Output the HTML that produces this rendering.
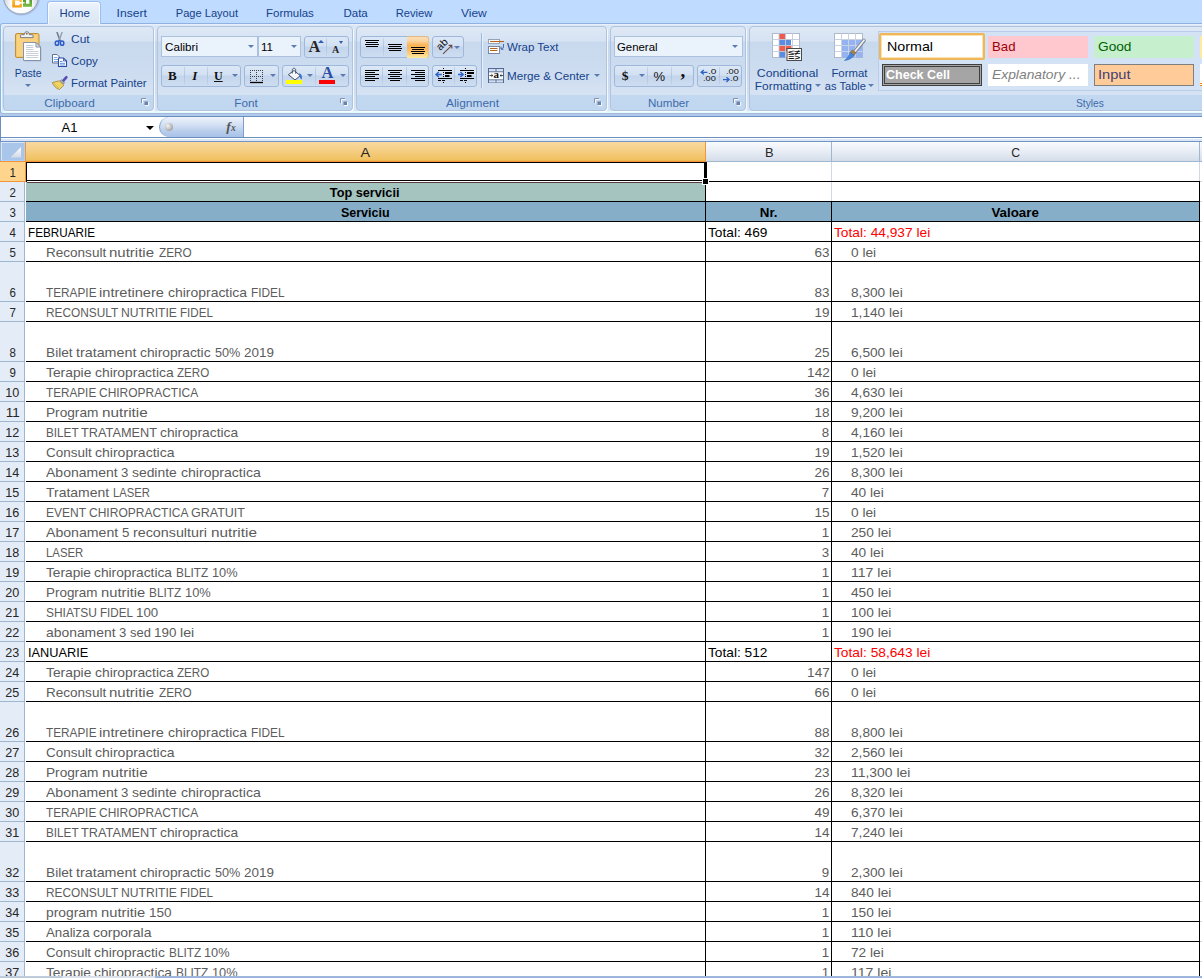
<!DOCTYPE html>
<html lang="ro">
<head>
<meta charset="utf-8">
<title>Top servicii</title>
<style>
html,body{margin:0;padding:0}
html{overflow:hidden;background:#fff}
body{width:1202px;height:978px;overflow:hidden;position:relative;background:#fff;font-family:"Liberation Sans",sans-serif;}
.t{position:absolute;white-space:pre;line-height:1;display:block}
.a{position:absolute}
.tabbar{left:0;top:0;width:1202px;height:116px;background:linear-gradient(#BFDBFF 0,#BFDBFF 100px,#B1C9ED 112px)}
.ribbon{left:0;top:23px;width:1210px;height:91px;box-sizing:border-box;border:1px solid #8DB2E3;border-bottom-color:#A3B9D8;border-radius:3px 0 0 3px;box-shadow:inset 0 -2px 0 #E4FAFF,inset 1px 0 0 #E4FAFF,inset 0 1px 0 #E9F0F9;background:linear-gradient(#DBE7F5 0,#D3E0F1 16px,#C7D8ED 18px,#CDDCEF 60px,#D9E5F4 88px)}
.grp{box-sizing:border-box;top:26px;height:85px;border:1px solid #B0C4E0;border-radius:4px;background:linear-gradient(#DEE8F5 0,#D6E3F3 14px,#C8D9EE 15px,#CEDDF0 50px,#D6E3F3 68px,#C2D8F0 68px,#C1D7EF 84px);box-shadow:1px 1px 0 rgba(255,255,255,.75)}
.combo{box-sizing:border-box;background:#EAF2FB;border:1px solid #ABC1DE;height:21px}
.bgrp{box-sizing:border-box;border:1px solid #9EB8DB;border-radius:3px;height:22px;background:linear-gradient(#DCE8F6 0,#D2E0F2 9px,#C3D5EC 10px,#CFDEF1 21px)}
.bsep{width:1px;background:linear-gradient(#C3D3EA,#AFC4E2,#C3D3EA);top:1px;height:18px}
.dd{width:0;height:0;border-left:3px solid transparent;border-right:3px solid transparent;border-top:3px solid #5B7CB0}
.launch{width:7px;height:7px}
.rowh{left:0;width:25px;background:#E4ECF7;border-right:1px solid #9EB6CE;border-bottom:1px solid #9EB6CE;box-sizing:border-box}
.colh{top:142px;height:20px;box-sizing:border-box;border-right:1px solid #9EB6CE;border-bottom:1px solid #9EB6CE;background:linear-gradient(#F9FCFD,#E8EDF5 50%,#D5DDEA)}
.hl{height:1px;background:#000}
.vl{width:1px;background:#000}
.gl{background:#D0D7E5}

</style>
</head>
<body>
<div class="a tabbar"></div>
<div class="a ribbon"></div>
<div class="a" style="left:47px;top:1px;width:54px;height:23px;box-sizing:border-box;border:1px solid #9BBDE9;border-bottom:none;border-radius:4px 4px 0 0;background:linear-gradient(#EDF3FC,#E2ECF8 10px,#DCE7F5)"></div>
<div class="a" style="left:48px;top:2px;width:52px;height:22px;box-sizing:border-box;border:1px solid rgba(255,255,255,.75);border-bottom:none;border-radius:3px 3px 0 0"></div>
<span class="t" style="left:59.53px;top:7.59px;font-size:11px;color:#15428B;transform:scaleX(1.0360);transform-origin:center center;">Home</span>
<span class="t" style="left:118.04px;top:7.59px;font-size:11px;color:#15428B;transform:scaleX(1.1012);transform-origin:center center;">Insert</span>
<span class="t" style="left:176.41px;top:7.59px;font-size:11px;color:#15428B;transform:scaleX(1.0084);transform-origin:center center;">Page Layout</span>
<span class="t" style="left:267.08px;top:7.59px;font-size:11px;color:#15428B;transform:scaleX(1.0427);transform-origin:center center;">Formulas</span>
<span class="t" style="left:343.98px;top:7.59px;font-size:11px;color:#15428B;transform:scaleX(1.0452);transform-origin:center center;">Data</span>
<span class="t" style="left:396.46px;top:7.59px;font-size:11px;color:#15428B;transform:scaleX(1.0200);transform-origin:center center;">Review</span>
<span class="t" style="left:461.67px;top:7.59px;font-size:11px;color:#15428B;transform:scaleX(1.0906);transform-origin:center center;">View</span>
<div class="a grp" style="left:3px;width:151px"></div>
<span class="t" style="left:46.25px;top:97.89px;font-size:11px;color:#3E6AAA;transform:scaleX(1.0723);transform-origin:center center;">Clipboard</span>
<span class="t" style="left:13.53px;top:68.19px;font-size:11px;color:#15428B;transform:scaleX(0.9524);transform-origin:center center;">Paste</span>
<div class="a dd" style="left:24.5px;top:84.2px;border-top-color:#5B7CB0"></div>
<span class="t" style="left:71.00px;top:33.89px;font-size:11px;color:#15428B;transform:scaleX(1.0861);transform-origin:left center;">Cut</span>
<span class="t" style="left:71.00px;top:55.89px;font-size:11px;color:#15428B;transform:scaleX(1.0433);transform-origin:left center;">Copy</span>
<span class="t" style="left:71.00px;top:77.89px;font-size:11px;color:#15428B;transform:scaleX(1.0392);transform-origin:left center;">Format Painter</span>
<div class="a grp" style="left:157px;width:196px"></div>
<span class="t" style="left:235.19px;top:97.89px;font-size:11px;color:#3E6AAA;transform:scaleX(1.0674);transform-origin:center center;">Font</span>
<div class="a combo" style="left:161px;top:36px;width:97px"></div>
<span class="t" style="left:164.60px;top:41.99px;font-size:11px;color:#000;transform:scaleX(1.0581);transform-origin:left center;">Calibri</span>
<div class="a dd" style="left:247.5px;top:45.2px;border-top-color:#5B7CB0"></div>
<div class="a combo" style="left:258px;top:36px;width:43px"></div>
<span class="t" style="left:261.30px;top:41.99px;font-size:11px;color:#000;transform:scaleX(1.0506);transform-origin:left center;">11</span>
<div class="a dd" style="left:290.5px;top:45.2px;border-top-color:#5B7CB0"></div>
<div class="a bgrp" style="left:304px;top:36px;width:45px"></div>
<div class="a bsep" style="left:326px;top:38px"></div>
<span class="t" style="left:308.60px;top:39.47px;font-size:16.4px;color:#262626;font-weight:bold;font-family:'Liberation Serif', serif;">A</span>
<div class="a" style="left:317.600px;top:39.800px;width:0;height:0;border-left:3px solid transparent;border-right:3px solid transparent;border-bottom:3px solid #2F5DAE"></div>
<span class="t" style="left:332.00px;top:44.83px;font-size:10px;color:#262626;font-weight:bold;font-family:'Liberation Serif', serif;">A</span>
<div class="a" style="left:339px;top:41px;width:0;height:0;border-left:2.500px solid transparent;border-right:2.500px solid transparent;border-top:3px solid #2F5DAE"></div>
<div class="a bgrp" style="left:161px;top:65px;width:80px"></div>
<div class="a bsep" style="left:184px;top:67px"></div>
<div class="a bsep" style="left:207px;top:67px"></div>
<span class="t" style="left:168.00px;top:69.31px;font-size:13px;color:#111;font-weight:bold;font-family:'Liberation Serif', serif;">B</span>
<span class="t" style="left:192.30px;top:69.31px;font-size:13px;color:#111;font-weight:bold;font-style:italic;font-family:'Liberation Serif', serif;">I</span>
<span class="t" style="left:214.00px;top:69.75px;font-size:12px;color:#111;font-weight:bold;font-family:'Liberation Serif', serif;text-decoration:underline;">U</span>
<div class="a dd" style="left:231.5px;top:74.2px;border-top-color:#5B7CB0"></div>
<div class="a bgrp" style="left:244px;top:65px;width:35px"></div>
<div class="a dd" style="left:269.5px;top:74.2px;border-top-color:#5B7CB0"></div>
<div class="a bgrp" style="left:282px;top:65px;width:67px"></div>
<div class="a bsep" style="left:315px;top:67px"></div>
<div class="a dd" style="left:306.5px;top:74.2px;border-top-color:#5B7CB0"></div>
<span class="t" style="left:321.40px;top:65.18px;font-size:16.5px;color:#2C4FA3;font-weight:bold;font-family:'Liberation Serif', serif;">A</span>
<div class="a" style="left:319px;top:80px;width:16px;height:4px;background:#FF0000"></div>
<div class="a dd" style="left:339.5px;top:74.2px;border-top-color:#5B7CB0"></div>
<div class="a grp" style="left:356px;width:251px"></div>
<span class="t" style="left:447.84px;top:97.89px;font-size:11px;color:#3E6AAA;transform:scaleX(1.0834);transform-origin:center center;">Alignment</span>
<div class="a bgrp" style="left:360px;top:36px;width:69px"></div>
<div class="a" style="left:407px;top:36px;width:22px;height:22px;box-sizing:border-box;border-top:1px solid #DDB98C;border-right:1px solid #E9C283;border-radius:0 3px 3px 0;background:linear-gradient(#FADDB6 0,#FBD4A0 4px,#FCB356 8px,#FCB85C 12px,#FDD27F 17px,#FFEBA2 21px)"></div>
<div class="a bsep" style="left:383px;top:38px"></div>
<div class="a" style="left:365.0px;top:39.9px;width:14.0px;height:1.200px;background:#000"></div><div class="a" style="left:366.0px;top:41.9px;width:12.0px;height:1.200px;background:#000"></div><div class="a" style="left:365.0px;top:43.9px;width:14.0px;height:1.200px;background:#000"></div><div class="a" style="left:366.0px;top:45.9px;width:12.0px;height:1.200px;background:#000"></div>
<div class="a" style="left:388.0px;top:43.9px;width:14.0px;height:1.200px;background:#000"></div><div class="a" style="left:389.0px;top:45.9px;width:12.0px;height:1.200px;background:#000"></div><div class="a" style="left:388.0px;top:47.9px;width:14.0px;height:1.200px;background:#000"></div><div class="a" style="left:389.0px;top:49.9px;width:12.0px;height:1.200px;background:#000"></div>
<div class="a" style="left:411.0px;top:46.9px;width:14.0px;height:1.200px;background:#000"></div><div class="a" style="left:412.0px;top:48.9px;width:12.0px;height:1.200px;background:#000"></div><div class="a" style="left:411.0px;top:50.9px;width:14.0px;height:1.200px;background:#000"></div><div class="a" style="left:412.0px;top:52.9px;width:12.0px;height:1.200px;background:#000"></div>
<div class="a bgrp" style="left:432px;top:36px;width:32px"></div>
<div class="a dd" style="left:453.5px;top:45.5px;border-top-color:#5B7CB0"></div>
<div class="a bgrp" style="left:360px;top:65px;width:69px"></div>
<div class="a bsep" style="left:382px;top:67px"></div>
<div class="a bsep" style="left:406px;top:67px"></div>
<div class="a" style="left:365.0px;top:69.9px;width:14.0px;height:1.200px;background:#000"></div><div class="a" style="left:365.0px;top:71.9px;width:10.0px;height:1.200px;background:#000"></div><div class="a" style="left:365.0px;top:73.9px;width:14.0px;height:1.200px;background:#000"></div><div class="a" style="left:365.0px;top:75.9px;width:10.0px;height:1.200px;background:#000"></div><div class="a" style="left:365.0px;top:77.9px;width:14.0px;height:1.200px;background:#000"></div><div class="a" style="left:365.0px;top:79.9px;width:10.0px;height:1.200px;background:#000"></div>
<div class="a" style="left:388.0px;top:69.9px;width:14.0px;height:1.200px;background:#000"></div><div class="a" style="left:390.0px;top:71.9px;width:10.0px;height:1.200px;background:#000"></div><div class="a" style="left:388.0px;top:73.9px;width:14.0px;height:1.200px;background:#000"></div><div class="a" style="left:390.0px;top:75.9px;width:10.0px;height:1.200px;background:#000"></div><div class="a" style="left:388.0px;top:77.9px;width:14.0px;height:1.200px;background:#000"></div><div class="a" style="left:390.0px;top:79.9px;width:10.0px;height:1.200px;background:#000"></div>
<div class="a" style="left:411.0px;top:69.9px;width:14.0px;height:1.200px;background:#000"></div><div class="a" style="left:415.0px;top:71.9px;width:10.0px;height:1.200px;background:#000"></div><div class="a" style="left:411.0px;top:73.9px;width:14.0px;height:1.200px;background:#000"></div><div class="a" style="left:415.0px;top:75.9px;width:10.0px;height:1.200px;background:#000"></div><div class="a" style="left:411.0px;top:77.9px;width:14.0px;height:1.200px;background:#000"></div><div class="a" style="left:415.0px;top:79.9px;width:10.0px;height:1.200px;background:#000"></div>
<div class="a bgrp" style="left:432px;top:65px;width:45px"></div>
<div class="a bsep" style="left:454px;top:67px"></div>
<div class="a" style="left:481px;top:33px;width:1px;height:55px;background:#9FB7D8"></div><div class="a" style="left:482px;top:33px;width:1px;height:55px;background:#E6EFFA"></div>
<span class="t" style="left:507.00px;top:41.99px;font-size:11px;color:#15428B;transform:scaleX(1.0483);transform-origin:left center;">Wrap Text</span>
<span class="t" style="left:507.00px;top:70.99px;font-size:11px;color:#15428B;transform:scaleX(1.0611);transform-origin:left center;">Merge &amp; Center</span>
<div class="a dd" style="left:594.0px;top:74.2px;border-top-color:#5B7CB0"></div>
<div class="a grp" style="left:610px;width:136px"></div>
<span class="t" style="left:649.24px;top:97.89px;font-size:11px;color:#3E6AAA;transform:scaleX(1.0530);transform-origin:center center;">Number</span>
<div class="a combo" style="left:614px;top:36px;width:129px"></div>
<span class="t" style="left:617.00px;top:41.99px;font-size:11px;color:#000;transform:scaleX(1.0347);transform-origin:left center;">General</span>
<div class="a dd" style="left:732.0px;top:45.2px;border-top-color:#5B7CB0"></div>
<div class="a bgrp" style="left:614px;top:65px;width:80px"></div>
<div class="a bsep" style="left:647px;top:67px"></div>
<div class="a bsep" style="left:671px;top:67px"></div>
<span class="t" style="left:621.80px;top:69.29px;font-size:13.5px;color:#111;font-weight:bold;font-family:'Liberation Serif', serif;">$</span>
<div class="a dd" style="left:638.5px;top:74.2px;border-top-color:#5B7CB0"></div>
<span class="t" style="left:653.60px;top:70.00px;font-size:13px;color:#111;">%</span>
<span class="t" style="left:680.60px;top:61.29px;font-size:19px;color:#111;font-weight:bold;font-family:'Liberation Serif', serif;">,</span>
<div class="a bgrp" style="left:697px;top:65px;width:45px"></div>
<div class="a bsep" style="left:719px;top:67px"></div>
<span class="t" style="left:708.00px;top:68.03px;font-size:8px;color:#111;transform:scaleX(1.2590);transform-origin:left center;">.0</span>
<span class="t" style="left:703.40px;top:75.13px;font-size:8px;color:#111;transform:scaleX(1.1506);transform-origin:left center;">.00</span>
<span class="t" style="left:725.50px;top:68.03px;font-size:8px;color:#111;transform:scaleX(1.1506);transform-origin:left center;">.00</span>
<span class="t" style="left:730.20px;top:75.13px;font-size:8px;color:#111;transform:scaleX(1.2590);transform-origin:left center;">.0</span>
<div class="a grp" style="left:749px;width:482px"></div>
<span class="t" style="left:1075.02px;top:97.89px;font-size:11px;color:#3E6AAA;transform:scaleX(0.9343);transform-origin:center center;">Styles</span>
<span class="t" style="left:760.08px;top:67.99px;font-size:11px;color:#15428B;transform:scaleX(1.1136);transform-origin:center center;">Conditional</span>
<span class="t" style="left:757.21px;top:80.89px;font-size:11px;color:#15428B;transform:scaleX(1.0841);transform-origin:center center;">Formatting</span>
<div class="a dd" style="left:815.0px;top:84.3px;border-top-color:#5B7CB0"></div>
<span class="t" style="left:831.78px;top:67.99px;font-size:11px;color:#15428B;transform:scaleX(1.0332);transform-origin:center center;">Format</span>
<span class="t" style="left:824.91px;top:80.89px;font-size:11px;color:#15428B;transform:scaleX(1.0103);transform-origin:center center;">as Table</span>
<div class="a dd" style="left:868.3px;top:84.3px;border-top-color:#5B7CB0"></div>
<div class="a" style="left:878px;top:31px;width:330px;height:60px;box-sizing:border-box;border:1px solid #B9CDE8;background:#D3E2F5"></div>
<div class="a" style="left:879px;top:33px;width:106px;height:27px;box-sizing:border-box;border:2px solid #EFB65A;border-radius:2px;background:#fff;box-shadow:inset 0 0 0 1px #FBE3B0"></div>
<span class="t" style="left:886.50px;top:40.30px;font-size:13px;color:#000;transform:scaleX(1.0977);transform-origin:left center;">Normal</span>
<div class="a" style="left:988px;top:36px;width:100px;height:22px;background:#FFC7CE"></div>
<span class="t" style="left:992.00px;top:40.30px;font-size:13px;color:#9C0006;transform:scaleX(1.0155);transform-origin:left center;">Bad</span>
<div class="a" style="left:1094px;top:36px;width:100px;height:22px;background:#C6EFCE"></div>
<span class="t" style="left:1098.00px;top:40.30px;font-size:13px;color:#006100;transform:scaleX(1.0530);transform-origin:left center;">Good</span>
<div class="a" style="left:1200px;top:36px;width:10px;height:22px;background:#FFEB9C"></div>
<div class="a" style="left:882px;top:64px;width:100px;height:22px;box-sizing:border-box;border:3px double #3F3F3F;background:#A5A5A5"></div>
<span class="t" style="left:886.00px;top:67.60px;font-size:13px;color:#fff;font-weight:bold;transform:scaleX(0.9626);transform-origin:left center;">Check Cell</span>
<div class="a" style="left:988px;top:64px;width:100px;height:22px;background:#fff"></div>
<span class="t" style="left:992.00px;top:67.60px;font-size:13px;color:#7F7F7F;font-style:italic;transform:scaleX(1.0649);transform-origin:left center;">Explanatory ...</span>
<div class="a" style="left:1094px;top:64px;width:100px;height:22px;box-sizing:border-box;border:1px solid #7F7F7F;background:#FFCC99"></div>
<span class="t" style="left:1098.00px;top:67.60px;font-size:13px;color:#3F3F76;transform:scaleX(1.1237);transform-origin:left center;">Input</span>
<div class="a" style="left:1200px;top:64px;width:10px;height:22px;box-sizing:border-box;background:#fff;border-bottom:3px double #FF8001"></div>
<svg class="a" style="left:0;top:0" width="1202" height="112" viewBox="0 0 1202 112"><defs><radialGradient id="ob" cx="50%" cy="70%" r="58%"><stop offset="0" stop-color="#fff"/><stop offset=".5" stop-color="#FBFCFD"/><stop offset=".8" stop-color="#D5DAE3"/><stop offset="1" stop-color="#B3BBCA"/></radialGradient>
<linearGradient id="og" x1="0" y1="0" x2="0" y2="1"><stop offset="0" stop-color="#FFC844"/><stop offset="1" stop-color="#F59A0C"/></linearGradient>
<linearGradient id="gg" x1="0" y1="0" x2="0" y2="1"><stop offset="0" stop-color="#3F8F22"/><stop offset="1" stop-color="#7DBE45"/></linearGradient></defs>
<ellipse cx="21.5" cy="-2.500" rx="18.500" ry="18" fill="#8FA6C8" opacity=".5"/>
<circle cx="21" cy="-3.500" r="17.500" fill="url(#ob)" stroke="#98A2B4" stroke-width="1"/>
<path d="M12.200 -3h9.600v10.600h-9.600z" fill="url(#og)"/><path d="M15 .6h4.600v1.500h2.200v1.600h-2.200v1.500h-4.600z" fill="#FBFCFE"/>
<path d="M23 -3h9v9.800h-9z" fill="url(#gg)"/><path d="M26 0h3.400v3.800h-3.400z" fill="#FBFCFE"/><path d="M23 2.100h1.600v1.500h-1.600z" fill="#E6F3D6"/><g transform="translate(141.0 98)"><path d="M.5 5V.5H5" fill="none" stroke="#8492AE"/><path d="M1.500 5.500V1.500H5.500" fill="none" stroke="#fff" opacity=".85"/><rect x="3.500" y="3.500" width="3.600" height="3.600" fill="#6C82A8"/><path d="M4 7.600h3.600V4" fill="none" stroke="#fff" opacity=".9"/></g><g>
<rect x="15.500" y="33.500" width="23.500" height="24" rx="1.500" fill="#F5C768" stroke="#C2903C"/>
<rect x="17" y="35" width="20.500" height="21" fill="#FADB95" opacity=".55"/>
<path d="M20.500 37.600v-1.900q0-1 1-1h2.700q.3-3.100 2.600-3.100t2.600 3.100h2.700q1 0 1 1v1.900z" fill="#F0F2F5" stroke="#6B7382" stroke-width=".9"/>
<circle cx="26.800" cy="33.700" r=".85" fill="#7A5A2A"/>
<path d="M24.500 43.500h12.500l4.500 4.500v13.500h-17z" fill="#7B879C" opacity=".35"/>
<path d="M23.500 42.500h12.500l4.500 4.500v13.500h-17z" fill="#fff" stroke="#8793A8"/>
<path d="M36 42.500v4.500h4.500z" fill="#DDE3EC" stroke="#8793A8" stroke-linejoin="round"/>
<path d="M26 45.500h7.500M26 47.500h7.500M26 49.500h7.500M26 51.500h12.500M26 53.500h12.500M26 55.500h12.500M26 57.500h12.500" stroke="#C3C9D4" stroke-width=".9"/>
</g><g>
<path d="M56.200 32h1.500l3.200 8.600-1.300 1.200z" fill="#6F7886"/><path d="M62.900 32h-1.500l-3.200 8.600 1.300 1.200z" fill="#98A1AE"/>
<ellipse cx="57" cy="43.200" rx="1.700" ry="2.100" fill="none" stroke="#2C5BC6" stroke-width="1.500"/>
<ellipse cx="62.100" cy="43.200" rx="1.700" ry="2.100" fill="none" stroke="#2C5BC6" stroke-width="1.500"/>
<path d="M58.300 41.200l1.250-.9 1.250.9" fill="none" stroke="#2C5BC6" stroke-width="1.300"/>
</g><g>
<path d="M52.500 54.500h4.500l2.500 2.500v6h-7z" fill="#fff" stroke="#5F7090"/>
<path d="M53.800 57.500h3.500M53.800 59.500h4.200M53.800 61.500h4.200" stroke="#6C9BE0" stroke-width=".9"/>
<path d="M58.500 58h5l3 3v5.500h-8z" fill="#fff" stroke="#2B4CA6" stroke-width="1.100"/>
<path d="M63.500 58v3h3" fill="none" stroke="#2B4CA6" stroke-width=".8"/>
<path d="M60 61.500h2.500M60 63.300h5M60 65h5" stroke="#4C84DC" stroke-width=".9"/>
</g><g>
<path d="M66.300 77.300l-3.600 4" stroke="#5A4EB6" stroke-width="2.700" stroke-linecap="round"/>
<path d="M61.400 79.700l3.200 3-1.800 1.900-3.200-3z" fill="#A9ADB8" stroke="#666B78" stroke-width=".6"/>
<path d="M59.300 80.800l4.600 4.400-4.500 4.300c-3.400-1-5.900-3.900-7.100-6.900z" fill="#F0D564" stroke="#9B8433" stroke-width=".8"/>
<path d="M54 83.500l5 4.500" stroke="#C9AE45" stroke-width=".7"/>
</g><g transform="translate(340.0 98)"><path d="M.5 5V.5H5" fill="none" stroke="#8492AE"/><path d="M1.500 5.500V1.500H5.500" fill="none" stroke="#fff" opacity=".85"/><rect x="3.500" y="3.500" width="3.600" height="3.600" fill="#6C82A8"/><path d="M4 7.600h3.600V4" fill="none" stroke="#fff" opacity=".9"/></g><g><path d="M250.500 70v11M256.500 70v11M262.500 70v11" stroke="#3F3F3F" stroke-width="1" stroke-dasharray="1 1" fill="none"/>
<path d="M250 70.500h13M250 76.500h13" stroke="#3F3F3F" stroke-width="1" stroke-dasharray="1 1" fill="none"/>
<path d="M250 82.500h13" stroke="#000" stroke-width="1.300"/></g><g><path d="M294 70.500l6.300 5.200-5.300 4.300-6.600-5.300z" fill="#F4F6FA" stroke="#3F4C66" stroke-width="1"/>
<path d="M290.300 74.500l4-3 4.800 4z" fill="#fff" opacity=".7"/>
<path d="M292.300 73.500v-3.300c0-2.600 3.400-2.600 3.400 0v3.600" fill="none" stroke="#3F4C66" stroke-width=".9"/>
<path d="M299.200 73.300c2.400.6 3.400 3.400 2.400 6.300-1.500-.8-2.300-3.300-2.400-6.300z" fill="#3D73C9"/>
<rect x="286" y="80" width="16.200" height="4" fill="#FFFF00"/></g><g transform="translate(594.0 98)"><path d="M.5 5V.5H5" fill="none" stroke="#8492AE"/><path d="M1.500 5.500V1.500H5.500" fill="none" stroke="#fff" opacity=".85"/><rect x="3.500" y="3.500" width="3.600" height="3.600" fill="#6C82A8"/><path d="M4 7.600h3.600V4" fill="none" stroke="#fff" opacity=".9"/></g><g><text x="0" y="0" font-family="Liberation Sans, sans-serif" font-size="10.500" fill="#111" transform="translate(440.300 50.900) rotate(-45)">ab</text>
<path d="M443 53.800L451.600 45.600M448.600 45.400h3.200v3.200" stroke="#6B4A45" stroke-width="1.100" fill="none"/></g><g transform="translate(0 0)"><path d="M443.500 68v15" stroke="#000" stroke-width="1" stroke-dasharray="1 1"/>
<rect x="438" y="70" width="14" height="1"/><rect x="438" y="78" width="14" height="1"/><rect x="438" y="80" width="3" height="1"/><rect x="442" y="80" width="3" height="1"/>
<rect x="445" y="72" width="7" height="2"/><rect x="445" y="75" width="4.500" height="2"/></g><g transform="translate(22 0)"><path d="M443.500 68v15" stroke="#000" stroke-width="1" stroke-dasharray="1 1"/>
<rect x="438" y="70" width="14" height="1"/><rect x="438" y="78" width="14" height="1"/><rect x="438" y="80" width="3" height="1"/><rect x="442" y="80" width="3" height="1"/>
<rect x="445" y="72" width="7" height="2"/><rect x="445" y="75" width="4.500" height="2"/></g><path d="M441.800 74.500h-5M438.800 72l-2.800 2.500 2.800 2.500" stroke="#2D62C4" stroke-width="1.400" fill="none"/><path d="M458 74.500h5M460.400 72l2.800 2.500-2.800 2.500" stroke="#2D62C4" stroke-width="1.400" fill="none"/><g><rect x="488.500" y="39.500" width="11" height="4" fill="#fff" stroke="#8C9BB5" stroke-width=".9"/>
<rect x="488.500" y="46.500" width="11" height="7" fill="#fff" stroke="#6D7F9F" stroke-width=".9"/>
<path d="M490 41.500h14" stroke="#B5651D" stroke-width="1.100"/><path d="M490 48.500h7.500M490 50.500h7.500" stroke="#B5651D" stroke-width="1.100"/>
<path d="M503.500 44v3.500l-2.300 1.500M501 46.500v2.700h2.500" stroke="#3A5FA8" stroke-width=".9" fill="none"/></g><g><rect x="488.500" y="68.500" width="15" height="14" fill="#fff" stroke="#4F6B97" stroke-width="1"/>
<rect x="489" y="69" width="14" height="2.500" fill="#D5DEEC"/><rect x="489" y="80" width="14" height="2.500" fill="#D5DEEC"/>
<path d="M488.500 71.800h15M488.500 79.800h15M496 68.500v3.300M496 79.800v2.700" stroke="#4F6B97" stroke-width=".9"/>
<text x="496.300" y="78" text-anchor="middle" font-family="Liberation Serif, serif" font-size="11" font-weight="bold" fill="#111">a</text>
<path d="M489.500 75.500h3.200M500 75.500h3.200M491.400 74.200l1.400 1.300-1.400 1.300M501.500 74.200l-1.400 1.300 1.400 1.300" stroke="#222" stroke-width=".8" fill="none"/></g><g transform="translate(733.0 98)"><path d="M.5 5V.5H5" fill="none" stroke="#8492AE"/><path d="M1.500 5.500V1.500H5.500" fill="none" stroke="#fff" opacity=".85"/><rect x="3.500" y="3.500" width="3.600" height="3.600" fill="#6C82A8"/><path d="M4 7.600h3.600V4" fill="none" stroke="#fff" opacity=".9"/></g><path d="M707.400 72.300h-6M703.800 70l-2.700 2.300 2.700 2.300" stroke="#2D62C4" stroke-width="1.300" fill="none"/><path d="M723 79.600h6M726.400 77.300l2.700 2.300-2.700 2.300" stroke="#2D62C4" stroke-width="1.300" fill="none"/><g><rect x="772.500" y="33.500" width="27" height="24" fill="#fff" stroke="#AEB9CC"/>
<rect x="779" y="34" width="6.500" height="5.500" fill="#EF5B4C"/><rect x="779" y="39.500" width="12" height="6" fill="#5C8BE2"/>
<rect x="779" y="45.500" width="12.500" height="6" fill="#EF5B4C"/><rect x="779" y="51.500" width="6.500" height="6" fill="#5C8BE2"/>
<path d="M772.500 39.500h27M772.500 45.500h27M772.500 51.500h27M779 33.500v24M785.500 33.500v24M792.500 33.500v24" stroke="#C3CBDA" stroke-width=".9"/>
<rect x="787" y="48.500" width="14.500" height="12" fill="#FAFAFA" stroke="#4A4A4A"/>
<text x="788.300" y="54.600" font-family="Liberation Sans, sans-serif" font-size="7" font-weight="bold" fill="#111" textLength="12" lengthAdjust="spacingAndGlyphs">≤≠</text>
<text x="788.300" y="59.800" font-family="Liberation Sans, sans-serif" font-size="7" font-weight="bold" fill="#111" textLength="12" lengthAdjust="spacingAndGlyphs">=&gt;</text></g><g><rect x="834.500" y="33.500" width="28" height="24" fill="#fff" stroke="#AEB9CC"/>
<rect x="841.500" y="39.500" width="21" height="18" fill="#94B3F0"/>
<path d="M834.500 39.500h28M834.500 45.500h28M834.500 51.500h28M841.500 33.500v24M848.500 33.500v24M855.500 33.500v24" stroke="#C9D2E4" stroke-width="1"/>
<path d="M864 40.500L855 51.500" stroke="#7F8794" stroke-width="3.600" stroke-linecap="round"/><path d="M864 40.200L855.300 51" stroke="#EEF0F3" stroke-width="1.800" stroke-linecap="round"/>
<path d="M852.200 49.800l3.800 3-2 2.600-3.800-3z" fill="#A5834A" stroke="#7C6031" stroke-width=".5"/>
<path d="M850.300 52.200l3.700 3c-2 3.200-5.400 5-9.500 5.300 2.800-2 4.500-5 5.800-8.300z" fill="#4A86DE" stroke="#2F62B8" stroke-width=".5"/></g></svg>
<div class="a" style="left:0;top:114px;width:1202px;height:2px;background:#B1C9ED"></div>
<div class="a" style="left:0;top:116px;width:1202px;height:1px;background:#6A8FBF"></div>
<div class="a" style="left:0;top:117px;width:1202px;height:20px;background:#fff"></div>
<div class="a" style="left:0;top:137px;width:1202px;height:1px;background:#6A8FBF"></div>
<div class="a" style="left:0;top:138px;width:1202px;height:3px;background:linear-gradient(#fff 0,#fff 1px,#DCE8F7 1px,#DCE8F7 3px)"></div>
<div class="a" style="left:0;top:141px;width:1202px;height:1px;background:#7294C2"></div>
<div class="a" style="left:0;top:116px;width:1px;height:26px;background:#6A8FBF"></div>
<span class="t" style="left:61.55px;top:121.00px;font-size:13px;color:#000;">A1</span>
<div class="a" style="left:145.5px;top:126px;width:0;height:0;border-left:4px solid transparent;border-right:4px solid transparent;border-top:4px solid #000"></div>
<div class="a" style="left:159px;top:117px;width:85px;height:20px;box-sizing:border-box;border:1px solid #7F9FCB;border-top:none;border-bottom:none;border-radius:10px 0 0 10px;background:linear-gradient(#EEF3FA 0,#D3E0F3 8px,#B9CEEC 14px,#A7C1E8 20px)"></div>
<div class="a" style="left:165px;top:123px;width:8px;height:8px;border-radius:50%;background:radial-gradient(circle at 35% 35%,#F4F4F4,#A9A9A9 70%,#8E8E8E)"></div>
<span class="t" style="left:226.30px;top:119.69px;font-size:13.5px;color:#555;font-weight:bold;font-style:italic;font-family:'Liberation Serif', serif;">f</span>
<span class="t" style="left:231.00px;top:124.04px;font-size:9.5px;color:#555;font-weight:bold;font-style:italic;font-family:'Liberation Serif', serif;">x</span>
<div class="a" style="left:0;top:142px;width:26px;height:20px;box-sizing:border-box;border-right:1px solid #F29536;border-bottom:1px solid #F29536;background:#A9C5EA"></div>
<div class="a" style="left:0;top:142px;width:1px;height:19px;background:#9CB5D4"></div>
<div class="a" style="left:1px;top:142px;width:24px;height:19px;box-sizing:border-box;border-top:1px solid #D9E6F7;border-left:1px solid #D9E6F7;border-right:1px solid #B0D0FA;border-bottom:1px solid #A9CEFF"></div>
<svg class="a" style="left:0;top:142px" width="26" height="20" viewBox="0 0 26 20"><defs><linearGradient id="tg" x1="0" y1="0" x2="0" y2="1"><stop offset="0" stop-color="#fff"/><stop offset="1" stop-color="#D3D9E6"/></linearGradient></defs><path d="M10.500 15.500L21 5v10.500z" fill="url(#tg)"/></svg>
<div class="a" style="left:26px;top:142px;width:680px;height:20px;box-sizing:border-box;border-right:1px solid #F29536;border-bottom:1px solid #F29536;background:linear-gradient(#F9D99F 0,#F5CE84 9px,#F1C15F 18px,#F2A94A 19px)"></div>
<div class="a colh" style="left:706px;width:126px"></div>
<div class="a colh" style="left:832px;width:368px"></div>
<div class="a colh" style="left:1200px;width:30px"></div>
<span class="t" style="left:361.36px;top:146.20px;font-size:13px;color:#262626;transform:scaleX(1.1070);transform-origin:center center;">A</span>
<span class="t" style="left:764.96px;top:146.20px;font-size:13px;color:#262626;transform:scaleX(0.9917);transform-origin:center center;">B</span>
<span class="t" style="left:1010.80px;top:146.20px;font-size:13px;color:#262626;transform:scaleX(0.9371);transform-origin:center center;">C</span>
<div class="a" style="left:0;top:162px;width:26px;height:20px;box-sizing:border-box;background:#FFD58D;border-right:1px solid #F29536;border-bottom:1px solid #F29536"></div>
<span class="t" style="left:8.98px;top:165.50px;font-size:13px;color:#262626;transform:scaleX(0.8847);transform-origin:center center;">1</span>
<div class="a hl" style="left:26px;top:181px;width:1174px"></div>
<div class="a gl" style="left:1200px;top:181px;width:2px;height:1px"></div>
<div class="a rowh" style="top:182px;height:20px"></div>
<span class="t" style="left:8.98px;top:185.50px;font-size:13px;color:#262626;transform:scaleX(0.8847);transform-origin:center center;">2</span>
<div class="a" style="left:26px;top:182px;width:679px;height:19px;background:#A5C4C0"></div>
<span class="t" style="left:329.15px;top:185.50px;font-size:13px;color:#000;font-weight:bold;transform:scaleX(0.9762);transform-origin:center center;">Top servicii</span>
<div class="a hl" style="left:26px;top:201px;width:1174px"></div>
<div class="a gl" style="left:1200px;top:201px;width:2px;height:1px"></div>
<div class="a rowh" style="top:202px;height:20px"></div>
<span class="t" style="left:8.98px;top:205.50px;font-size:13px;color:#262626;transform:scaleX(0.8847);transform-origin:center center;">3</span>
<div class="a" style="left:26px;top:202px;width:1173px;height:19px;background:#87AEC8"></div>
<span class="t" style="left:340.00px;top:205.50px;font-size:13px;color:#000;font-weight:bold;transform:scaleX(0.9626);transform-origin:center center;">Serviciu</span>
<span class="t" style="left:759.73px;top:205.50px;font-size:13px;color:#000;font-weight:bold;transform:scaleX(1.0263);transform-origin:center center;">Nr.</span>
<span class="t" style="left:991.67px;top:205.50px;font-size:13px;color:#000;font-weight:bold;transform:scaleX(1.0267);transform-origin:center center;">Valoare</span>
<div class="a hl" style="left:26px;top:221px;width:1174px"></div>
<div class="a gl" style="left:1200px;top:221px;width:2px;height:1px"></div>
<div class="a rowh" style="top:222px;height:20px"></div>
<span class="t" style="left:8.98px;top:225.50px;font-size:13px;color:#262626;transform:scaleX(0.8847);transform-origin:center center;">4</span>
<span class="t" style="left:27.60px;top:225.50px;font-size:13px;color:#000;transform:scaleX(0.9005);transform-origin:left center;">FEBRUARIE</span>
<span class="t" style="left:708.00px;top:225.50px;font-size:13px;color:#000;transform:scaleX(1.0537);transform-origin:left center;">Total: 469</span>
<span class="t" style="left:833.80px;top:225.50px;font-size:13px;color:#FF0000;transform:scaleX(1.0562);transform-origin:left center;">Total: 44,937 lei</span>
<div class="a hl" style="left:26px;top:241px;width:1174px"></div>
<div class="a gl" style="left:1200px;top:241px;width:2px;height:1px"></div>
<div class="a rowh" style="top:242px;height:20px"></div>
<span class="t" style="left:8.98px;top:245.50px;font-size:13px;color:#262626;transform:scaleX(0.8847);transform-origin:center center;">5</span>
<span class="t" style="left:45.50px;top:245.50px;font-size:13px;color:#5C5C5C;transform:scaleX(1.0410);transform-origin:left center;">Reconsult </span><span class="t" style="left:109.44px;top:245.50px;font-size:13px;color:#5C5C5C;transform:scaleX(1.1546);transform-origin:left center;">nutritie </span><span class="t" style="left:158.67px;top:245.50px;font-size:13px;color:#5C5C5C;transform:scaleX(0.9059);transform-origin:left center;">ZERO</span>
<span class="t" style="left:814.93px;top:245.50px;font-size:13px;color:#5C5C5C;transform:scaleX(1.0367);transform-origin:right center;">63</span>
<span class="t" style="left:851.00px;top:245.50px;font-size:13px;color:#5C5C5C;transform:scaleX(1.0541);transform-origin:left center;">0 lei</span>
<div class="a hl" style="left:26px;top:261px;width:1174px"></div>
<div class="a gl" style="left:1200px;top:261px;width:2px;height:1px"></div>
<div class="a rowh" style="top:262px;height:40px"></div>
<span class="t" style="left:8.98px;top:285.50px;font-size:13px;color:#262626;transform:scaleX(0.8847);transform-origin:center center;">6</span>
<span class="t" style="left:45.50px;top:285.50px;font-size:13px;color:#5C5C5C;transform:scaleX(0.9080);transform-origin:left center;">TERAPIE </span><span class="t" style="left:99.30px;top:285.50px;font-size:13px;color:#5C5C5C;transform:scaleX(1.1244);transform-origin:left center;">intretinere </span><span class="t" style="left:168.36px;top:285.50px;font-size:13px;color:#5C5C5C;transform:scaleX(1.0731);transform-origin:left center;">chiropractica </span><span class="t" style="left:251.33px;top:285.50px;font-size:13px;color:#5C5C5C;transform:scaleX(0.9112);transform-origin:left center;">FIDEL</span>
<span class="t" style="left:814.93px;top:285.50px;font-size:13px;color:#5C5C5C;transform:scaleX(1.0367);transform-origin:right center;">83</span>
<span class="t" style="left:851.00px;top:285.50px;font-size:13px;color:#5C5C5C;transform:scaleX(1.0517);transform-origin:left center;">8,300 lei</span>
<div class="a hl" style="left:26px;top:301px;width:1174px"></div>
<div class="a gl" style="left:1200px;top:301px;width:2px;height:1px"></div>
<div class="a rowh" style="top:302px;height:20px"></div>
<span class="t" style="left:8.98px;top:305.50px;font-size:13px;color:#262626;transform:scaleX(0.8847);transform-origin:center center;">7</span>
<span class="t" style="left:45.50px;top:305.50px;font-size:13px;color:#5C5C5C;transform:scaleX(0.9118);transform-origin:left center;">RECONSULT </span><span class="t" style="left:120.81px;top:305.50px;font-size:13px;color:#5C5C5C;transform:scaleX(0.9335);transform-origin:left center;">NUTRITIE </span><span class="t" style="left:180.15px;top:305.50px;font-size:13px;color:#5C5C5C;transform:scaleX(0.8943);transform-origin:left center;">FIDEL</span>
<span class="t" style="left:814.93px;top:305.50px;font-size:13px;color:#5C5C5C;transform:scaleX(1.0367);transform-origin:right center;">19</span>
<span class="t" style="left:851.00px;top:305.50px;font-size:13px;color:#5C5C5C;transform:scaleX(1.0517);transform-origin:left center;">1,140 lei</span>
<div class="a hl" style="left:26px;top:321px;width:1174px"></div>
<div class="a gl" style="left:1200px;top:321px;width:2px;height:1px"></div>
<div class="a rowh" style="top:322px;height:40px"></div>
<span class="t" style="left:8.98px;top:345.50px;font-size:13px;color:#262626;transform:scaleX(0.8847);transform-origin:center center;">8</span>
<span class="t" style="left:45.50px;top:345.50px;font-size:13px;color:#5C5C5C;transform:scaleX(1.0525);transform-origin:left center;">Bilet </span><span class="t" style="left:75.92px;top:345.50px;font-size:13px;color:#5C5C5C;transform:scaleX(1.0996);transform-origin:left center;">tratament </span><span class="t" style="left:140.28px;top:345.50px;font-size:13px;color:#5C5C5C;transform:scaleX(1.0620);transform-origin:left center;">chiropractic </span><span class="t" style="left:214.71px;top:345.50px;font-size:13px;color:#5C5C5C;transform:scaleX(0.9736);transform-origin:left center;">50% </span><span class="t" style="left:243.56px;top:345.50px;font-size:13px;color:#5C5C5C;transform:scaleX(1.0350);transform-origin:left center;">2019</span>
<span class="t" style="left:814.93px;top:345.50px;font-size:13px;color:#5C5C5C;transform:scaleX(1.0367);transform-origin:right center;">25</span>
<span class="t" style="left:851.00px;top:345.50px;font-size:13px;color:#5C5C5C;transform:scaleX(1.0517);transform-origin:left center;">6,500 lei</span>
<div class="a hl" style="left:26px;top:361px;width:1174px"></div>
<div class="a gl" style="left:1200px;top:361px;width:2px;height:1px"></div>
<div class="a rowh" style="top:362px;height:20px"></div>
<span class="t" style="left:8.98px;top:365.50px;font-size:13px;color:#262626;transform:scaleX(0.8847);transform-origin:center center;">9</span>
<span class="t" style="left:45.50px;top:365.50px;font-size:13px;color:#5C5C5C;transform:scaleX(1.0628);transform-origin:left center;">Terapie </span><span class="t" style="left:94.66px;top:365.50px;font-size:13px;color:#5C5C5C;transform:scaleX(1.0666);transform-origin:left center;">chiropractica </span><span class="t" style="left:177.12px;top:365.50px;font-size:13px;color:#5C5C5C;transform:scaleX(0.8935);transform-origin:left center;">ZERO</span>
<span class="t" style="left:807.70px;top:365.50px;font-size:13px;color:#5C5C5C;transform:scaleX(1.0413);transform-origin:right center;">142</span>
<span class="t" style="left:851.00px;top:365.50px;font-size:13px;color:#5C5C5C;transform:scaleX(1.0541);transform-origin:left center;">0 lei</span>
<div class="a hl" style="left:26px;top:381px;width:1174px"></div>
<div class="a gl" style="left:1200px;top:381px;width:2px;height:1px"></div>
<div class="a rowh" style="top:382px;height:20px"></div>
<span class="t" style="left:5.37px;top:385.50px;font-size:13px;color:#262626;transform:scaleX(0.9676);transform-origin:center center;">10</span>
<span class="t" style="left:45.50px;top:385.50px;font-size:13px;color:#5C5C5C;transform:scaleX(0.9025);transform-origin:left center;">TERAPIE </span><span class="t" style="left:98.98px;top:385.50px;font-size:13px;color:#5C5C5C;transform:scaleX(0.9210);transform-origin:left center;">CHIROPRACTICA</span>
<span class="t" style="left:814.93px;top:385.50px;font-size:13px;color:#5C5C5C;transform:scaleX(1.0367);transform-origin:right center;">36</span>
<span class="t" style="left:851.00px;top:385.50px;font-size:13px;color:#5C5C5C;transform:scaleX(1.0517);transform-origin:left center;">4,630 lei</span>
<div class="a hl" style="left:26px;top:401px;width:1174px"></div>
<div class="a gl" style="left:1200px;top:401px;width:2px;height:1px"></div>
<div class="a rowh" style="top:402px;height:20px"></div>
<span class="t" style="left:5.85px;top:405.50px;font-size:13px;color:#262626;transform:scaleX(1.0370);transform-origin:center center;">11</span>
<span class="t" style="left:45.50px;top:405.50px;font-size:13px;color:#5C5C5C;transform:scaleX(1.0507);transform-origin:left center;">Program </span><span class="t" style="left:101.68px;top:405.50px;font-size:13px;color:#5C5C5C;transform:scaleX(1.1714);transform-origin:left center;">nutritie</span>
<span class="t" style="left:814.93px;top:405.50px;font-size:13px;color:#5C5C5C;transform:scaleX(1.0367);transform-origin:right center;">18</span>
<span class="t" style="left:851.00px;top:405.50px;font-size:13px;color:#5C5C5C;transform:scaleX(1.0517);transform-origin:left center;">9,200 lei</span>
<div class="a hl" style="left:26px;top:421px;width:1174px"></div>
<div class="a gl" style="left:1200px;top:421px;width:2px;height:1px"></div>
<div class="a rowh" style="top:422px;height:20px"></div>
<span class="t" style="left:5.37px;top:425.50px;font-size:13px;color:#262626;transform:scaleX(0.9676);transform-origin:center center;">12</span>
<span class="t" style="left:45.50px;top:425.50px;font-size:13px;color:#5C5C5C;transform:scaleX(0.9024);transform-origin:left center;">BILET </span><span class="t" style="left:81.16px;top:425.50px;font-size:13px;color:#5C5C5C;transform:scaleX(0.9807);transform-origin:left center;">TRATAMENT </span><span class="t" style="left:160.48px;top:425.50px;font-size:13px;color:#5C5C5C;transform:scaleX(1.0599);transform-origin:left center;">chiropractica</span>
<span class="t" style="left:822.17px;top:425.50px;font-size:13px;color:#5C5C5C;transform:scaleX(1.0229);transform-origin:right center;">8</span>
<span class="t" style="left:851.00px;top:425.50px;font-size:13px;color:#5C5C5C;transform:scaleX(1.0517);transform-origin:left center;">4,160 lei</span>
<div class="a hl" style="left:26px;top:441px;width:1174px"></div>
<div class="a gl" style="left:1200px;top:441px;width:2px;height:1px"></div>
<div class="a rowh" style="top:442px;height:20px"></div>
<span class="t" style="left:5.37px;top:445.50px;font-size:13px;color:#262626;transform:scaleX(0.9676);transform-origin:center center;">13</span>
<span class="t" style="left:45.50px;top:445.50px;font-size:13px;color:#5C5C5C;transform:scaleX(1.0357);transform-origin:left center;">Consult </span><span class="t" style="left:94.91px;top:445.50px;font-size:13px;color:#5C5C5C;transform:scaleX(1.0786);transform-origin:left center;">chiropractica</span>
<span class="t" style="left:814.93px;top:445.50px;font-size:13px;color:#5C5C5C;transform:scaleX(1.0367);transform-origin:right center;">19</span>
<span class="t" style="left:851.00px;top:445.50px;font-size:13px;color:#5C5C5C;transform:scaleX(1.0517);transform-origin:left center;">1,520 lei</span>
<div class="a hl" style="left:26px;top:461px;width:1174px"></div>
<div class="a gl" style="left:1200px;top:461px;width:2px;height:1px"></div>
<div class="a rowh" style="top:462px;height:20px"></div>
<span class="t" style="left:5.37px;top:465.50px;font-size:13px;color:#262626;transform:scaleX(0.9676);transform-origin:center center;">14</span>
<span class="t" style="left:45.50px;top:465.50px;font-size:13px;color:#5C5C5C;transform:scaleX(1.0781);transform-origin:left center;">Abonament </span><span class="t" style="left:121.09px;top:465.50px;font-size:13px;color:#5C5C5C;transform:scaleX(1.0182);transform-origin:left center;">3 </span><span class="t" style="left:132.13px;top:465.50px;font-size:13px;color:#5C5C5C;transform:scaleX(1.0672);transform-origin:left center;">sedinte </span><span class="t" style="left:180.74px;top:465.50px;font-size:13px;color:#5C5C5C;transform:scaleX(1.0822);transform-origin:left center;">chiropractica</span>
<span class="t" style="left:814.93px;top:465.50px;font-size:13px;color:#5C5C5C;transform:scaleX(1.0367);transform-origin:right center;">26</span>
<span class="t" style="left:851.00px;top:465.50px;font-size:13px;color:#5C5C5C;transform:scaleX(1.0517);transform-origin:left center;">8,300 lei</span>
<div class="a hl" style="left:26px;top:481px;width:1174px"></div>
<div class="a gl" style="left:1200px;top:481px;width:2px;height:1px"></div>
<div class="a rowh" style="top:482px;height:20px"></div>
<span class="t" style="left:5.37px;top:485.50px;font-size:13px;color:#262626;transform:scaleX(0.9676);transform-origin:center center;">15</span>
<span class="t" style="left:45.50px;top:485.50px;font-size:13px;color:#5C5C5C;transform:scaleX(1.0746);transform-origin:left center;">Tratament </span><span class="t" style="left:112.53px;top:485.50px;font-size:13px;color:#5C5C5C;transform:scaleX(0.8671);transform-origin:left center;">LASER</span>
<span class="t" style="left:822.17px;top:485.50px;font-size:13px;color:#5C5C5C;transform:scaleX(1.0229);transform-origin:right center;">7</span>
<span class="t" style="left:851.00px;top:485.50px;font-size:13px;color:#5C5C5C;transform:scaleX(1.0538);transform-origin:left center;">40 lei</span>
<div class="a hl" style="left:26px;top:501px;width:1174px"></div>
<div class="a gl" style="left:1200px;top:501px;width:2px;height:1px"></div>
<div class="a rowh" style="top:502px;height:20px"></div>
<span class="t" style="left:5.37px;top:505.50px;font-size:13px;color:#262626;transform:scaleX(0.9676);transform-origin:center center;">16</span>
<span class="t" style="left:45.50px;top:505.50px;font-size:13px;color:#5C5C5C;transform:scaleX(0.9249);transform-origin:left center;">EVENT </span><span class="t" style="left:88.71px;top:505.50px;font-size:13px;color:#5C5C5C;transform:scaleX(0.9245);transform-origin:left center;">CHIROPRACTICA </span><span class="t" style="left:190.88px;top:505.50px;font-size:13px;color:#5C5C5C;transform:scaleX(0.9612);transform-origin:left center;">GRATUIT</span>
<span class="t" style="left:814.93px;top:505.50px;font-size:13px;color:#5C5C5C;transform:scaleX(1.0367);transform-origin:right center;">15</span>
<span class="t" style="left:851.00px;top:505.50px;font-size:13px;color:#5C5C5C;transform:scaleX(1.0541);transform-origin:left center;">0 lei</span>
<div class="a hl" style="left:26px;top:521px;width:1174px"></div>
<div class="a gl" style="left:1200px;top:521px;width:2px;height:1px"></div>
<div class="a rowh" style="top:522px;height:20px"></div>
<span class="t" style="left:5.37px;top:525.50px;font-size:13px;color:#262626;transform:scaleX(0.9676);transform-origin:center center;">17</span>
<span class="t" style="left:45.50px;top:525.50px;font-size:13px;color:#5C5C5C;transform:scaleX(1.0859);transform-origin:left center;">Abonament </span><span class="t" style="left:121.63px;top:525.50px;font-size:13px;color:#5C5C5C;transform:scaleX(1.0256);transform-origin:left center;">5 </span><span class="t" style="left:132.76px;top:525.50px;font-size:13px;color:#5C5C5C;transform:scaleX(1.0994);transform-origin:left center;">reconsulturi </span><span class="t" style="left:210.60px;top:525.50px;font-size:13px;color:#5C5C5C;transform:scaleX(1.1759);transform-origin:left center;">nutritie</span>
<span class="t" style="left:822.17px;top:525.50px;font-size:13px;color:#5C5C5C;transform:scaleX(1.0229);transform-origin:right center;">1</span>
<span class="t" style="left:851.00px;top:525.50px;font-size:13px;color:#5C5C5C;transform:scaleX(1.0532);transform-origin:left center;">250 lei</span>
<div class="a hl" style="left:26px;top:541px;width:1174px"></div>
<div class="a gl" style="left:1200px;top:541px;width:2px;height:1px"></div>
<div class="a rowh" style="top:542px;height:20px"></div>
<span class="t" style="left:5.37px;top:545.50px;font-size:13px;color:#262626;transform:scaleX(0.9676);transform-origin:center center;">18</span>
<span class="t" style="left:45.50px;top:545.50px;font-size:13px;color:#5C5C5C;transform:scaleX(0.8748);transform-origin:left center;">LASER</span>
<span class="t" style="left:822.17px;top:545.50px;font-size:13px;color:#5C5C5C;transform:scaleX(1.0229);transform-origin:right center;">3</span>
<span class="t" style="left:851.00px;top:545.50px;font-size:13px;color:#5C5C5C;transform:scaleX(1.0538);transform-origin:left center;">40 lei</span>
<div class="a hl" style="left:26px;top:561px;width:1174px"></div>
<div class="a gl" style="left:1200px;top:561px;width:2px;height:1px"></div>
<div class="a rowh" style="top:562px;height:20px"></div>
<span class="t" style="left:5.37px;top:565.50px;font-size:13px;color:#262626;transform:scaleX(0.9676);transform-origin:center center;">19</span>
<span class="t" style="left:45.50px;top:565.50px;font-size:13px;color:#5C5C5C;transform:scaleX(1.0549);transform-origin:left center;">Terapie </span><span class="t" style="left:94.29px;top:565.50px;font-size:13px;color:#5C5C5C;transform:scaleX(1.0586);transform-origin:left center;">chiropractica </span><span class="t" style="left:176.13px;top:565.50px;font-size:13px;color:#5C5C5C;transform:scaleX(0.9108);transform-origin:left center;">BLITZ </span><span class="t" style="left:211.67px;top:565.50px;font-size:13px;color:#5C5C5C;transform:scaleX(0.9846);transform-origin:left center;">10%</span>
<span class="t" style="left:822.17px;top:565.50px;font-size:13px;color:#5C5C5C;transform:scaleX(1.0229);transform-origin:right center;">1</span>
<span class="t" style="left:851.00px;top:565.50px;font-size:13px;color:#5C5C5C;transform:scaleX(1.0805);transform-origin:left center;">117 lei</span>
<div class="a hl" style="left:26px;top:581px;width:1174px"></div>
<div class="a gl" style="left:1200px;top:581px;width:2px;height:1px"></div>
<div class="a rowh" style="top:582px;height:20px"></div>
<span class="t" style="left:5.37px;top:585.50px;font-size:13px;color:#262626;transform:scaleX(0.9676);transform-origin:center center;">20</span>
<span class="t" style="left:45.50px;top:585.50px;font-size:13px;color:#5C5C5C;transform:scaleX(1.0333);transform-origin:left center;">Program </span><span class="t" style="left:100.75px;top:585.50px;font-size:13px;color:#5C5C5C;transform:scaleX(1.1333);transform-origin:left center;">nutritie </span><span class="t" style="left:149.07px;top:585.50px;font-size:13px;color:#5C5C5C;transform:scaleX(0.9132);transform-origin:left center;">BLITZ </span><span class="t" style="left:184.70px;top:585.50px;font-size:13px;color:#5C5C5C;transform:scaleX(0.9873);transform-origin:left center;">10%</span>
<span class="t" style="left:822.17px;top:585.50px;font-size:13px;color:#5C5C5C;transform:scaleX(1.0229);transform-origin:right center;">1</span>
<span class="t" style="left:851.00px;top:585.50px;font-size:13px;color:#5C5C5C;transform:scaleX(1.0532);transform-origin:left center;">450 lei</span>
<div class="a hl" style="left:26px;top:601px;width:1174px"></div>
<div class="a gl" style="left:1200px;top:601px;width:2px;height:1px"></div>
<div class="a rowh" style="top:602px;height:20px"></div>
<span class="t" style="left:5.37px;top:605.50px;font-size:13px;color:#262626;transform:scaleX(0.9676);transform-origin:center center;">21</span>
<span class="t" style="left:45.50px;top:605.50px;font-size:13px;color:#5C5C5C;transform:scaleX(0.9195);transform-origin:left center;">SHIATSU </span><span class="t" style="left:99.75px;top:605.50px;font-size:13px;color:#5C5C5C;transform:scaleX(0.8956);transform-origin:left center;">FIDEL </span><span class="t" style="left:135.56px;top:605.50px;font-size:13px;color:#5C5C5C;transform:scaleX(1.0201);transform-origin:left center;">100</span>
<span class="t" style="left:822.17px;top:605.50px;font-size:13px;color:#5C5C5C;transform:scaleX(1.0229);transform-origin:right center;">1</span>
<span class="t" style="left:851.00px;top:605.50px;font-size:13px;color:#5C5C5C;transform:scaleX(1.0532);transform-origin:left center;">100 lei</span>
<div class="a hl" style="left:26px;top:621px;width:1174px"></div>
<div class="a gl" style="left:1200px;top:621px;width:2px;height:1px"></div>
<div class="a rowh" style="top:622px;height:20px"></div>
<span class="t" style="left:5.37px;top:625.50px;font-size:13px;color:#262626;transform:scaleX(0.9676);transform-origin:center center;">22</span>
<span class="t" style="left:45.50px;top:625.50px;font-size:13px;color:#5C5C5C;transform:scaleX(1.0684);transform-origin:left center;">abonament </span><span class="t" style="left:118.87px;top:625.50px;font-size:13px;color:#5C5C5C;transform:scaleX(1.0085);transform-origin:left center;">3 </span><span class="t" style="left:129.81px;top:625.50px;font-size:13px;color:#5C5C5C;transform:scaleX(0.9955);transform-origin:left center;">sed </span><span class="t" style="left:154.27px;top:625.50px;font-size:13px;color:#5C5C5C;transform:scaleX(1.0297);transform-origin:left center;">190 </span><span class="t" style="left:180.34px;top:625.50px;font-size:13px;color:#5C5C5C;transform:scaleX(1.0958);transform-origin:left center;">lei</span>
<span class="t" style="left:822.17px;top:625.50px;font-size:13px;color:#5C5C5C;transform:scaleX(1.0229);transform-origin:right center;">1</span>
<span class="t" style="left:851.00px;top:625.50px;font-size:13px;color:#5C5C5C;transform:scaleX(1.0532);transform-origin:left center;">190 lei</span>
<div class="a hl" style="left:26px;top:641px;width:1174px"></div>
<div class="a gl" style="left:1200px;top:641px;width:2px;height:1px"></div>
<div class="a rowh" style="top:642px;height:20px"></div>
<span class="t" style="left:5.37px;top:645.50px;font-size:13px;color:#262626;transform:scaleX(0.9676);transform-origin:center center;">23</span>
<span class="t" style="left:27.60px;top:645.50px;font-size:13px;color:#000;transform:scaleX(0.9820);transform-origin:left center;">IANUARIE</span>
<span class="t" style="left:708.00px;top:645.50px;font-size:13px;color:#000;transform:scaleX(1.0537);transform-origin:left center;">Total: 512</span>
<span class="t" style="left:833.80px;top:645.50px;font-size:13px;color:#FF0000;transform:scaleX(1.0562);transform-origin:left center;">Total: 58,643 lei</span>
<div class="a hl" style="left:26px;top:661px;width:1174px"></div>
<div class="a gl" style="left:1200px;top:661px;width:2px;height:1px"></div>
<div class="a rowh" style="top:662px;height:20px"></div>
<span class="t" style="left:5.37px;top:665.50px;font-size:13px;color:#262626;transform:scaleX(0.9676);transform-origin:center center;">24</span>
<span class="t" style="left:45.50px;top:665.50px;font-size:13px;color:#5C5C5C;transform:scaleX(1.0628);transform-origin:left center;">Terapie </span><span class="t" style="left:94.66px;top:665.50px;font-size:13px;color:#5C5C5C;transform:scaleX(1.0666);transform-origin:left center;">chiropractica </span><span class="t" style="left:177.12px;top:665.50px;font-size:13px;color:#5C5C5C;transform:scaleX(0.8935);transform-origin:left center;">ZERO</span>
<span class="t" style="left:807.70px;top:665.50px;font-size:13px;color:#5C5C5C;transform:scaleX(1.0413);transform-origin:right center;">147</span>
<span class="t" style="left:851.00px;top:665.50px;font-size:13px;color:#5C5C5C;transform:scaleX(1.0541);transform-origin:left center;">0 lei</span>
<div class="a hl" style="left:26px;top:681px;width:1174px"></div>
<div class="a gl" style="left:1200px;top:681px;width:2px;height:1px"></div>
<div class="a rowh" style="top:682px;height:20px"></div>
<span class="t" style="left:5.37px;top:685.50px;font-size:13px;color:#262626;transform:scaleX(0.9676);transform-origin:center center;">25</span>
<span class="t" style="left:45.50px;top:685.50px;font-size:13px;color:#5C5C5C;transform:scaleX(1.0410);transform-origin:left center;">Reconsult </span><span class="t" style="left:109.44px;top:685.50px;font-size:13px;color:#5C5C5C;transform:scaleX(1.1546);transform-origin:left center;">nutritie </span><span class="t" style="left:158.67px;top:685.50px;font-size:13px;color:#5C5C5C;transform:scaleX(0.9059);transform-origin:left center;">ZERO</span>
<span class="t" style="left:814.93px;top:685.50px;font-size:13px;color:#5C5C5C;transform:scaleX(1.0367);transform-origin:right center;">66</span>
<span class="t" style="left:851.00px;top:685.50px;font-size:13px;color:#5C5C5C;transform:scaleX(1.0541);transform-origin:left center;">0 lei</span>
<div class="a hl" style="left:26px;top:701px;width:1174px"></div>
<div class="a gl" style="left:1200px;top:701px;width:2px;height:1px"></div>
<div class="a rowh" style="top:702px;height:40px"></div>
<span class="t" style="left:5.37px;top:725.50px;font-size:13px;color:#262626;transform:scaleX(0.9676);transform-origin:center center;">26</span>
<span class="t" style="left:45.50px;top:725.50px;font-size:13px;color:#5C5C5C;transform:scaleX(0.9080);transform-origin:left center;">TERAPIE </span><span class="t" style="left:99.30px;top:725.50px;font-size:13px;color:#5C5C5C;transform:scaleX(1.1244);transform-origin:left center;">intretinere </span><span class="t" style="left:168.36px;top:725.50px;font-size:13px;color:#5C5C5C;transform:scaleX(1.0731);transform-origin:left center;">chiropractica </span><span class="t" style="left:251.33px;top:725.50px;font-size:13px;color:#5C5C5C;transform:scaleX(0.9112);transform-origin:left center;">FIDEL</span>
<span class="t" style="left:814.93px;top:725.50px;font-size:13px;color:#5C5C5C;transform:scaleX(1.0367);transform-origin:right center;">88</span>
<span class="t" style="left:851.00px;top:725.50px;font-size:13px;color:#5C5C5C;transform:scaleX(1.0517);transform-origin:left center;">8,800 lei</span>
<div class="a hl" style="left:26px;top:741px;width:1174px"></div>
<div class="a gl" style="left:1200px;top:741px;width:2px;height:1px"></div>
<div class="a rowh" style="top:742px;height:20px"></div>
<span class="t" style="left:5.37px;top:745.50px;font-size:13px;color:#262626;transform:scaleX(0.9676);transform-origin:center center;">27</span>
<span class="t" style="left:45.50px;top:745.50px;font-size:13px;color:#5C5C5C;transform:scaleX(1.0357);transform-origin:left center;">Consult </span><span class="t" style="left:94.91px;top:745.50px;font-size:13px;color:#5C5C5C;transform:scaleX(1.0786);transform-origin:left center;">chiropractica</span>
<span class="t" style="left:814.93px;top:745.50px;font-size:13px;color:#5C5C5C;transform:scaleX(1.0367);transform-origin:right center;">32</span>
<span class="t" style="left:851.00px;top:745.50px;font-size:13px;color:#5C5C5C;transform:scaleX(1.0517);transform-origin:left center;">2,560 lei</span>
<div class="a hl" style="left:26px;top:761px;width:1174px"></div>
<div class="a gl" style="left:1200px;top:761px;width:2px;height:1px"></div>
<div class="a rowh" style="top:762px;height:20px"></div>
<span class="t" style="left:5.37px;top:765.50px;font-size:13px;color:#262626;transform:scaleX(0.9676);transform-origin:center center;">28</span>
<span class="t" style="left:45.50px;top:765.50px;font-size:13px;color:#5C5C5C;transform:scaleX(1.0507);transform-origin:left center;">Program </span><span class="t" style="left:101.68px;top:765.50px;font-size:13px;color:#5C5C5C;transform:scaleX(1.1714);transform-origin:left center;">nutritie</span>
<span class="t" style="left:814.93px;top:765.50px;font-size:13px;color:#5C5C5C;transform:scaleX(1.0367);transform-origin:right center;">23</span>
<span class="t" style="left:851.00px;top:765.50px;font-size:13px;color:#5C5C5C;transform:scaleX(1.0700);transform-origin:left center;">11,300 lei</span>
<div class="a hl" style="left:26px;top:781px;width:1174px"></div>
<div class="a gl" style="left:1200px;top:781px;width:2px;height:1px"></div>
<div class="a rowh" style="top:782px;height:20px"></div>
<span class="t" style="left:5.37px;top:785.50px;font-size:13px;color:#262626;transform:scaleX(0.9676);transform-origin:center center;">29</span>
<span class="t" style="left:45.50px;top:785.50px;font-size:13px;color:#5C5C5C;transform:scaleX(1.0781);transform-origin:left center;">Abonament </span><span class="t" style="left:121.09px;top:785.50px;font-size:13px;color:#5C5C5C;transform:scaleX(1.0182);transform-origin:left center;">3 </span><span class="t" style="left:132.13px;top:785.50px;font-size:13px;color:#5C5C5C;transform:scaleX(1.0672);transform-origin:left center;">sedinte </span><span class="t" style="left:180.74px;top:785.50px;font-size:13px;color:#5C5C5C;transform:scaleX(1.0822);transform-origin:left center;">chiropractica</span>
<span class="t" style="left:814.93px;top:785.50px;font-size:13px;color:#5C5C5C;transform:scaleX(1.0367);transform-origin:right center;">26</span>
<span class="t" style="left:851.00px;top:785.50px;font-size:13px;color:#5C5C5C;transform:scaleX(1.0517);transform-origin:left center;">8,320 lei</span>
<div class="a hl" style="left:26px;top:801px;width:1174px"></div>
<div class="a gl" style="left:1200px;top:801px;width:2px;height:1px"></div>
<div class="a rowh" style="top:802px;height:20px"></div>
<span class="t" style="left:5.37px;top:805.50px;font-size:13px;color:#262626;transform:scaleX(0.9676);transform-origin:center center;">30</span>
<span class="t" style="left:45.50px;top:805.50px;font-size:13px;color:#5C5C5C;transform:scaleX(0.9025);transform-origin:left center;">TERAPIE </span><span class="t" style="left:98.98px;top:805.50px;font-size:13px;color:#5C5C5C;transform:scaleX(0.9210);transform-origin:left center;">CHIROPRACTICA</span>
<span class="t" style="left:814.93px;top:805.50px;font-size:13px;color:#5C5C5C;transform:scaleX(1.0367);transform-origin:right center;">49</span>
<span class="t" style="left:851.00px;top:805.50px;font-size:13px;color:#5C5C5C;transform:scaleX(1.0517);transform-origin:left center;">6,370 lei</span>
<div class="a hl" style="left:26px;top:821px;width:1174px"></div>
<div class="a gl" style="left:1200px;top:821px;width:2px;height:1px"></div>
<div class="a rowh" style="top:822px;height:20px"></div>
<span class="t" style="left:5.37px;top:825.50px;font-size:13px;color:#262626;transform:scaleX(0.9676);transform-origin:center center;">31</span>
<span class="t" style="left:45.50px;top:825.50px;font-size:13px;color:#5C5C5C;transform:scaleX(0.9024);transform-origin:left center;">BILET </span><span class="t" style="left:81.16px;top:825.50px;font-size:13px;color:#5C5C5C;transform:scaleX(0.9807);transform-origin:left center;">TRATAMENT </span><span class="t" style="left:160.48px;top:825.50px;font-size:13px;color:#5C5C5C;transform:scaleX(1.0599);transform-origin:left center;">chiropractica</span>
<span class="t" style="left:814.93px;top:825.50px;font-size:13px;color:#5C5C5C;transform:scaleX(1.0367);transform-origin:right center;">14</span>
<span class="t" style="left:851.00px;top:825.50px;font-size:13px;color:#5C5C5C;transform:scaleX(1.0517);transform-origin:left center;">7,240 lei</span>
<div class="a hl" style="left:26px;top:841px;width:1174px"></div>
<div class="a gl" style="left:1200px;top:841px;width:2px;height:1px"></div>
<div class="a rowh" style="top:842px;height:40px"></div>
<span class="t" style="left:5.37px;top:865.50px;font-size:13px;color:#262626;transform:scaleX(0.9676);transform-origin:center center;">32</span>
<span class="t" style="left:45.50px;top:865.50px;font-size:13px;color:#5C5C5C;transform:scaleX(1.0525);transform-origin:left center;">Bilet </span><span class="t" style="left:75.92px;top:865.50px;font-size:13px;color:#5C5C5C;transform:scaleX(1.0996);transform-origin:left center;">tratament </span><span class="t" style="left:140.28px;top:865.50px;font-size:13px;color:#5C5C5C;transform:scaleX(1.0620);transform-origin:left center;">chiropractic </span><span class="t" style="left:214.71px;top:865.50px;font-size:13px;color:#5C5C5C;transform:scaleX(0.9736);transform-origin:left center;">50% </span><span class="t" style="left:243.56px;top:865.50px;font-size:13px;color:#5C5C5C;transform:scaleX(1.0350);transform-origin:left center;">2019</span>
<span class="t" style="left:822.17px;top:865.50px;font-size:13px;color:#5C5C5C;transform:scaleX(1.0229);transform-origin:right center;">9</span>
<span class="t" style="left:851.00px;top:865.50px;font-size:13px;color:#5C5C5C;transform:scaleX(1.0517);transform-origin:left center;">2,300 lei</span>
<div class="a hl" style="left:26px;top:881px;width:1174px"></div>
<div class="a gl" style="left:1200px;top:881px;width:2px;height:1px"></div>
<div class="a rowh" style="top:882px;height:20px"></div>
<span class="t" style="left:5.37px;top:885.50px;font-size:13px;color:#262626;transform:scaleX(0.9676);transform-origin:center center;">33</span>
<span class="t" style="left:45.50px;top:885.50px;font-size:13px;color:#5C5C5C;transform:scaleX(0.9118);transform-origin:left center;">RECONSULT </span><span class="t" style="left:120.81px;top:885.50px;font-size:13px;color:#5C5C5C;transform:scaleX(0.9335);transform-origin:left center;">NUTRITIE </span><span class="t" style="left:180.15px;top:885.50px;font-size:13px;color:#5C5C5C;transform:scaleX(0.8943);transform-origin:left center;">FIDEL</span>
<span class="t" style="left:814.93px;top:885.50px;font-size:13px;color:#5C5C5C;transform:scaleX(1.0367);transform-origin:right center;">14</span>
<span class="t" style="left:851.00px;top:885.50px;font-size:13px;color:#5C5C5C;transform:scaleX(1.0532);transform-origin:left center;">840 lei</span>
<div class="a hl" style="left:26px;top:901px;width:1174px"></div>
<div class="a gl" style="left:1200px;top:901px;width:2px;height:1px"></div>
<div class="a rowh" style="top:902px;height:20px"></div>
<span class="t" style="left:5.37px;top:905.50px;font-size:13px;color:#262626;transform:scaleX(0.9676);transform-origin:center center;">34</span>
<span class="t" style="left:45.50px;top:905.50px;font-size:13px;color:#5C5C5C;transform:scaleX(1.0641);transform-origin:left center;">program </span><span class="t" style="left:100.87px;top:905.50px;font-size:13px;color:#5C5C5C;transform:scaleX(1.1333);transform-origin:left center;">nutritie </span><span class="t" style="left:149.19px;top:905.50px;font-size:13px;color:#5C5C5C;transform:scaleX(1.0417);transform-origin:left center;">150</span>
<span class="t" style="left:822.17px;top:905.50px;font-size:13px;color:#5C5C5C;transform:scaleX(1.0229);transform-origin:right center;">1</span>
<span class="t" style="left:851.00px;top:905.50px;font-size:13px;color:#5C5C5C;transform:scaleX(1.0532);transform-origin:left center;">150 lei</span>
<div class="a hl" style="left:26px;top:921px;width:1174px"></div>
<div class="a gl" style="left:1200px;top:921px;width:2px;height:1px"></div>
<div class="a rowh" style="top:922px;height:20px"></div>
<span class="t" style="left:5.37px;top:925.50px;font-size:13px;color:#262626;transform:scaleX(0.9676);transform-origin:center center;">35</span>
<span class="t" style="left:45.50px;top:925.50px;font-size:13px;color:#5C5C5C;transform:scaleX(1.0224);transform-origin:left center;">Analiza </span><span class="t" style="left:92.78px;top:925.50px;font-size:13px;color:#5C5C5C;transform:scaleX(1.0796);transform-origin:left center;">corporala</span>
<span class="t" style="left:822.17px;top:925.50px;font-size:13px;color:#5C5C5C;transform:scaleX(1.0229);transform-origin:right center;">1</span>
<span class="t" style="left:851.00px;top:925.50px;font-size:13px;color:#5C5C5C;transform:scaleX(1.0805);transform-origin:left center;">110 lei</span>
<div class="a hl" style="left:26px;top:941px;width:1174px"></div>
<div class="a gl" style="left:1200px;top:941px;width:2px;height:1px"></div>
<div class="a rowh" style="top:942px;height:20px"></div>
<span class="t" style="left:5.37px;top:945.50px;font-size:13px;color:#262626;transform:scaleX(0.9676);transform-origin:center center;">36</span>
<span class="t" style="left:45.50px;top:945.50px;font-size:13px;color:#5C5C5C;transform:scaleX(1.0216);transform-origin:left center;">Consult </span><span class="t" style="left:94.24px;top:945.50px;font-size:13px;color:#5C5C5C;transform:scaleX(1.0655);transform-origin:left center;">chiropractic </span><span class="t" style="left:168.90px;top:945.50px;font-size:13px;color:#5C5C5C;transform:scaleX(0.9098);transform-origin:left center;">BLITZ </span><span class="t" style="left:204.40px;top:945.50px;font-size:13px;color:#5C5C5C;transform:scaleX(0.9836);transform-origin:left center;">10%</span>
<span class="t" style="left:822.17px;top:945.50px;font-size:13px;color:#5C5C5C;transform:scaleX(1.0229);transform-origin:right center;">1</span>
<span class="t" style="left:851.00px;top:945.50px;font-size:13px;color:#5C5C5C;transform:scaleX(1.0538);transform-origin:left center;">72 lei</span>
<div class="a hl" style="left:26px;top:961px;width:1174px"></div>
<div class="a gl" style="left:1200px;top:961px;width:2px;height:1px"></div>
<div class="a rowh" style="top:962px;height:20px"></div>
<span class="t" style="left:5.37px;top:965.50px;font-size:13px;color:#262626;transform:scaleX(0.9676);transform-origin:center center;">37</span>
<span class="t" style="left:45.50px;top:965.50px;font-size:13px;color:#5C5C5C;transform:scaleX(1.0549);transform-origin:left center;">Terapie </span><span class="t" style="left:94.29px;top:965.50px;font-size:13px;color:#5C5C5C;transform:scaleX(1.0586);transform-origin:left center;">chiropractica </span><span class="t" style="left:176.13px;top:965.50px;font-size:13px;color:#5C5C5C;transform:scaleX(0.9108);transform-origin:left center;">BLITZ </span><span class="t" style="left:211.67px;top:965.50px;font-size:13px;color:#5C5C5C;transform:scaleX(0.9846);transform-origin:left center;">10%</span>
<span class="t" style="left:822.17px;top:965.50px;font-size:13px;color:#5C5C5C;transform:scaleX(1.0229);transform-origin:right center;">1</span>
<span class="t" style="left:851.00px;top:965.50px;font-size:13px;color:#5C5C5C;transform:scaleX(1.0805);transform-origin:left center;">117 lei</span>
<div class="a hl" style="left:26px;top:981px;width:1174px"></div>
<div class="a gl" style="left:1200px;top:981px;width:2px;height:1px"></div>
<div class="a vl" style="left:705px;top:182px;height:800px"></div>
<div class="a vl" style="left:831px;top:202px;height:800px"></div>
<div class="a vl" style="left:1199px;top:181px;height:800px"></div>
<div class="a gl" style="left:831px;top:162px;width:1px;height:19px"></div>
<div class="a gl" style="left:831px;top:182px;width:1px;height:19px"></div>
<div class="a gl" style="left:1199px;top:162px;width:1px;height:19px"></div>
<div class="a gl" style="left:705px;top:162px;width:1px;height:19px"></div>
<div class="a" style="left:26px;top:162px;width:681px;height:1px;background:#000"></div>
<div class="a" style="left:26px;top:162px;width:1px;height:19px;background:#000"></div>
<div class="a" style="left:26px;top:180px;width:677px;height:1px;background:#000"></div>
<div class="a" style="left:27px;top:181px;width:676px;height:1px;background:#fff"></div>
<div class="a" style="left:27px;top:182px;width:676px;height:1px;background:#5A3B3F"></div>
<div class="a" style="left:704px;top:162px;width:3px;height:16px;background:#000"></div>
<div class="a" style="left:703px;top:179px;width:5px;height:5px;background:#000;box-shadow:0 0 0 1px #fff"></div>
<div class="a" style="left:0;top:976px;width:1202px;height:2px;background:linear-gradient(#B9CBE6 0,#86A4D3 1px,#A9C0E3 2px)"></div>
<div class="a" style="left:0;top:976px;width:62px;height:2px;background:linear-gradient(#D5DDE9 0,#AEBCD1 1px,#C5D0E0 2px)"></div>
<div class="a" style="left:62px;top:976px;width:93px;height:2px;background:linear-gradient(#E6EBF3 0,#C9D3E1 1px,#F2F5FA 2px)"></div>
</body>
</html>
